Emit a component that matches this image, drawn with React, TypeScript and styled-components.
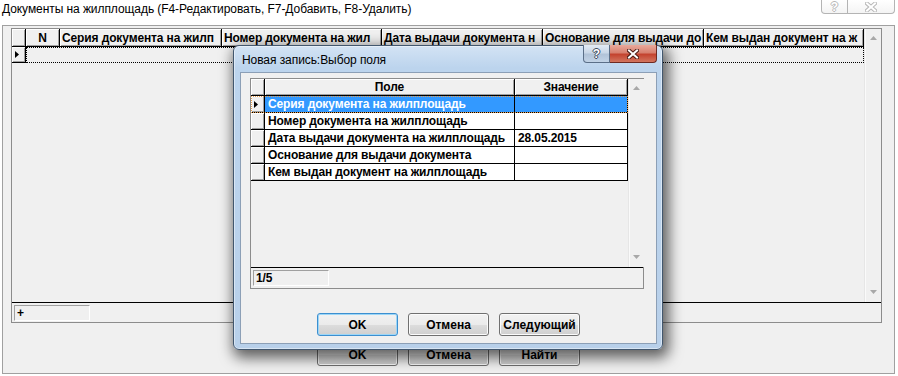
import styled, { createGlobalStyle, css } from "styled-components";

const GlobalStyle = createGlobalStyle`
  html, body {
    margin: 0;
    padding: 0;
    background: #fff;
  }
  body {
    font-family: "Liberation Sans", Arial, sans-serif;
    overflow: hidden;
  }
`;

const Screen = styled.div`
  position: relative;
  width: 898px;
  height: 376px;
  background: #fff;
  overflow: hidden;
`;

const TitleRow = styled.div`
  display: flex;
  justify-content: space-between;
  align-items: flex-start;
  height: 25px;
`;

const TitleText = styled.div`
  padding: 2px 0 0 2px;
  font-size: 12px;
  letter-spacing: -0.07px;
  line-height: 15px;
  color: #000;
  white-space: nowrap;
`;

const DialogTitle = styled(TitleText)`
  padding: 7px 0 0 8px;
`;

const CaptionGroup = styled.div<{ $mr: number; $mt?: number }>`
  display: flex;
  margin-right: ${(p) => p.$mr}px;
  margin-top: ${(p) => p.$mt ?? 0}px;
`;

type Variant = "idle" | "help" | "close";

const variants = {
  idle: css`
    height: 14px;
    background: linear-gradient(#ffffff, #f4f4f4);
    border: 1px solid #b4b4b4;
    border-top: none;
  `,
  help: css`
    height: 18px;
    background: linear-gradient(#e3ebf4 0%, #c9d7e7 45%, #b1c3d8 55%, #c2d3e6 100%);
    border: 1px solid #5b6f88;
    border-top: none;
  `,
  close: css`
    height: 18px;
    background: linear-gradient(#e9a99b 0%, #d7806f 45%, #c4432f 55%, #d2755f 100%);
    border: 1px solid #6e2a22;
    border-top: none;
  `,
};

const CaptionButton = styled.div<{ $w: number; $side: "left" | "right"; $variant: Variant }>`
  width: ${(p) => p.$w}px;
  box-sizing: border-box;
  display: flex;
  align-items: center;
  justify-content: center;
  ${(p) => variants[p.$variant]}
  ${(p) =>
    p.$side === "left"
      ? css`
          border-bottom-left-radius: 4px;
        `
      : css`
          border-left: none;
          border-bottom-right-radius: 4px;
        `}
`;

const HelpGlyph = styled.span<{ $outline: string }>`
  font-family: "Liberation Sans", Arial, sans-serif;
  font-weight: bold;
  font-size: 12px;
  line-height: 12px;
  color: #fff;
  text-shadow: 1px 0 ${(p) => p.$outline}, -1px 0 ${(p) => p.$outline},
    0 1px ${(p) => p.$outline}, 0 -1px ${(p) => p.$outline};
`;

const Frame = styled.div`
  margin: 0 3px 0 2px;
  height: 349px;
  box-sizing: border-box;
  border: 1px solid #a0a0a0;
  background: #f0f0f0;
  padding-top: 2px;
  display: flex;
  flex-direction: column;
`;

const Grid = styled.div<{ $w: number; $h: number; $ml: number }>`
  width: ${(p) => p.$w}px;
  height: ${(p) => p.$h}px;
  margin-left: ${(p) => p.$ml}px;
  box-sizing: border-box;
  border: 1px solid #8c8c8c;
  background: #f0f0f0;
  display: flex;
  flex-direction: column;
`;

const GridBody = styled.div`
  flex: 1;
  min-height: 0;
  display: flex;
  border-bottom: 1px solid #000;
`;

const GridCols = styled.div`
  flex: 1;
  display: flex;
  flex-direction: column;
`;

const Row = styled.div<{ $h: number }>`
  display: flex;
  height: ${(p) => p.$h}px;
`;

const raised = css`
  background: #f0f0f0;
  box-shadow: inset 1px 1px #fff, inset -1px -1px #a0a0a0;
`;

const Indicator = styled.div<{ $w: number }>`
  width: ${(p) => p.$w}px;
  flex: none;
  box-sizing: border-box;
  border-right: 1px solid #000;
  border-bottom: 1px solid #000;
  display: flex;
  align-items: center;
  padding-left: 3px;
  ${raised}
`;

const cellText = css`
  font-family: "Liberation Sans", Arial, sans-serif;
  font-weight: bold;
  font-size: 12px;
  letter-spacing: -0.12px;
  white-space: nowrap;
  overflow: hidden;
`;

const HeaderCell = styled.div<{ $w: number; $center?: boolean }>`
  width: ${(p) => p.$w}px;
  flex: none;
  box-sizing: border-box;
  border-right: 1px solid #000;
  border-bottom: 1px solid #000;
  padding: 0 2px;
  display: flex;
  align-items: center;
  justify-content: ${(p) => (p.$center ? "center" : "flex-start")};
  color: #000;
  ${cellText}
  ${raised}
`;

const DataCell = styled.div<{ $w: number; $selected?: boolean }>`
  width: ${(p) => p.$w}px;
  flex: none;
  box-sizing: border-box;
  border-right: 1px solid #000;
  border-bottom: 1px solid #000;
  padding: 0 3px;
  display: flex;
  align-items: center;
  ${cellText}
  background: ${(p) => (p.$selected ? "#3399ff" : "#fff")};
  color: ${(p) => (p.$selected ? "#fff" : "#000")};
`;

const SelectedRow = styled(Row)`
  outline: 1px dotted #e8a050;
  outline-offset: -1px;
`;

const FocusRect = styled.div<{ $w: number }>`
  width: ${(p) => p.$w}px;
  box-sizing: border-box;
  border: 1px dotted #000;
`;

const ScrollBar = styled.div<{ $w: number }>`
  width: ${(p) => p.$w}px;
  flex: none;
  box-sizing: border-box;
  background: #f0f0f0;
  border-left: 1px solid #e6e6e6;
  box-shadow: inset 1px 0 #fafafa;
  display: flex;
  flex-direction: column;
  align-items: center;
  justify-content: space-between;
  padding: 7px 0 8px;
`;

const StatusBar = styled.div<{ $h: number }>`
  height: ${(p) => p.$h}px;
  flex: none;
  box-sizing: border-box;
  padding: 2px 0 0 2px;
`;

const StatusBox = styled.div`
  width: 76px;
  height: 16px;
  box-sizing: border-box;
  border-top: 1px solid #a0a0a0;
  border-left: 1px solid #a0a0a0;
  border-right: 1px solid #fff;
  border-bottom: 1px solid #fff;
  padding-left: 2px;
  display: flex;
  align-items: center;
  color: #000;
  ${cellText}
`;

const ButtonRow = styled.div<{ $mt: number }>`
  display: flex;
  justify-content: center;
  gap: 10px;
  margin-top: ${(p) => p.$mt}px;
`;

const Button = styled.div<{ $default?: boolean }>`
  width: 81px;
  height: 23px;
  box-sizing: border-box;
  border: 1px solid ${(p) => (p.$default ? "#3c8fd0" : "#707070")};
  border-radius: 3px;
  background: linear-gradient(#f2f2f2 0%, #ebebeb 50%, #dddddd 51%, #cfcfcf 100%);
  box-shadow: inset 0 0 0 1px ${(p) => (p.$default ? "#9cd6f7" : "#fbfbfb")};
  display: flex;
  align-items: center;
  justify-content: center;
  font-family: "Liberation Sans", Arial, sans-serif;
  font-weight: bold;
  font-size: 12px;
  color: #000;
`;

const Dialog = styled.div`
  position: absolute;
  left: 233px;
  top: 45px;
  width: 430px;
  height: 305px;
  box-sizing: border-box;
  border: 1px solid #42576e;
  border-radius: 6px;
  background: linear-gradient(180deg, #d3e3f4 0%, #bcd4ed 22px, #b8d0ea 100%);
  box-shadow: 3px 5px 14px 3px rgba(0, 0, 0, 0.6),
    inset 0 0 0 1px rgba(255, 255, 255, 0.45);
  display: flex;
  flex-direction: column;
`;

const DialogBar = styled.div`
  display: flex;
  justify-content: space-between;
  align-items: flex-start;
  height: 26px;
`;

const Client = styled.div`
  flex: 1;
  margin: 0 5px 5px 6px;
  box-sizing: border-box;
  border: 1px solid #8c9fb6;
  background: #f0f0f0;
  padding-top: 5px;
  display: flex;
  flex-direction: column;
`;

const RowMarker = () => (
  <svg width="4" height="7" viewBox="0 0 4 7">
    <polygon points="0,0 4,3.5 0,7" fill="#000" />
  </svg>
);

const Arrow = ({ up }: { up?: boolean }) => (
  <svg width="7" height="4" viewBox="0 0 7 4">
    <polygon points={up ? "0,4 3.5,0 7,4" : "0,0 3.5,4 7,0"} fill="#a8a8a8" />
  </svg>
);

const CloseGlyph = ({ fill, stroke }: { fill: string; stroke: string }) => (
  <svg width="12" height="10" viewBox="0 0 12 10">
    <path d="M2 1.5 L10 8.5 M10 1.5 L2 8.5" stroke={stroke} strokeWidth="4" strokeLinecap="square" />
    <path d="M2 1.5 L10 8.5 M10 1.5 L2 8.5" stroke={fill} strokeWidth="2" strokeLinecap="square" />
  </svg>
);

const mainCols = [
  { w: 34, label: "N", center: true },
  { w: 162, label: "Серия документа на жилп" },
  { w: 160, label: "Номер документа на жил" },
  { w: 161, label: "Дата выдачи документа н" },
  { w: 161, label: "Основание для выдачи до" },
  { w: 160, label: "Кем выдан документ на ж" },
];

const fields = [
  { field: "Серия документа на жилплощадь", value: "" },
  { field: "Номер документа на жилплощадь", value: "" },
  { field: "Дата выдачи документа на жилплощадь", value: "28.05.2015" },
  { field: "Основание для выдачи документа", value: "" },
  { field: "Кем выдан документ на жилплощадь", value: "" },
];

const App = () => {
  return (
    <Screen>
      <GlobalStyle />
      <TitleRow>
        <TitleText>Документы на жилплощадь (F4-Редактировать, F7-Добавить, F8-Удалить)</TitleText>
        <CaptionGroup $mr={3}>
          <CaptionButton $w={27} $side="left" $variant="idle">
            <HelpGlyph $outline="#b8b8b8">?</HelpGlyph>
          </CaptionButton>
          <CaptionButton $w={47} $side="right" $variant="idle">
            <CloseGlyph fill="#fff" stroke="#b8b8b8" />
          </CaptionButton>
        </CaptionGroup>
      </TitleRow>

      <Frame>
        <Grid $w={871} $h={295} $ml={8}>
          <GridBody>
            <GridCols>
              <Row $h={18}>
                <Indicator $w={14} />
                {mainCols.map((c) => (
                  <HeaderCell key={c.label} $w={c.w} $center={c.center}>
                    {c.label}
                  </HeaderCell>
                ))}
              </Row>
              <Row $h={16}>
                <Indicator $w={14}>
                  <RowMarker />
                </Indicator>
                <FocusRect $w={838} />
              </Row>
            </GridCols>
            <ScrollBar $w={17}>
              <Arrow up />
              <Arrow />
            </ScrollBar>
          </GridBody>
          <StatusBar $h={19}>
            <StatusBox>+</StatusBox>
          </StatusBar>
        </Grid>
        <ButtonRow $mt={20}>
          <Button>OK</Button>
          <Button>Отмена</Button>
          <Button>Найти</Button>
        </ButtonRow>
      </Frame>

      <Dialog>
        <DialogBar>
          <DialogTitle>Новая запись:Выбор поля</DialogTitle>
          <CaptionGroup $mr={5} $mt={-1}>
            <CaptionButton $w={27} $side="left" $variant="help">
              <HelpGlyph $outline="#3d4b5e">?</HelpGlyph>
            </CaptionButton>
            <CaptionButton $w={47} $side="right" $variant="close">
              <CloseGlyph fill="#fff" stroke="#4a1a14" />
            </CaptionButton>
          </CaptionGroup>
        </DialogBar>
        <Client>
          <Grid $w={394} $h={211} $ml={9}>
            <GridBody>
              <GridCols>
                <Row $h={17}>
                  <Indicator $w={14} />
                  <HeaderCell $w={250} $center>
                    Поле
                  </HeaderCell>
                  <HeaderCell $w={113} $center>
                    Значение
                  </HeaderCell>
                </Row>
                {fields.map((f, i) =>
                  i === 0 ? (
                    <SelectedRow $h={17} key={f.field}>
                      <Indicator $w={14}>
                        <RowMarker />
                      </Indicator>
                      <DataCell $w={250} $selected>
                        {f.field}
                      </DataCell>
                      <DataCell $w={113} $selected>
                        {f.value}
                      </DataCell>
                    </SelectedRow>
                  ) : (
                    <Row $h={17} key={f.field}>
                      <Indicator $w={14} />
                      <DataCell $w={250}>{f.field}</DataCell>
                      <DataCell $w={113}>{f.value}</DataCell>
                    </Row>
                  )
                )}
              </GridCols>
              <ScrollBar $w={16}>
                <Arrow up />
                <Arrow />
              </ScrollBar>
            </GridBody>
            <StatusBar $h={20}>
              <StatusBox>1/5</StatusBox>
            </StatusBar>
          </Grid>
          <ButtonRow $mt={24}>
            <Button $default>OK</Button>
            <Button>Отмена</Button>
            <Button>Следующий</Button>
          </ButtonRow>
        </Client>
      </Dialog>
    </Screen>
  );
};

export default App;
